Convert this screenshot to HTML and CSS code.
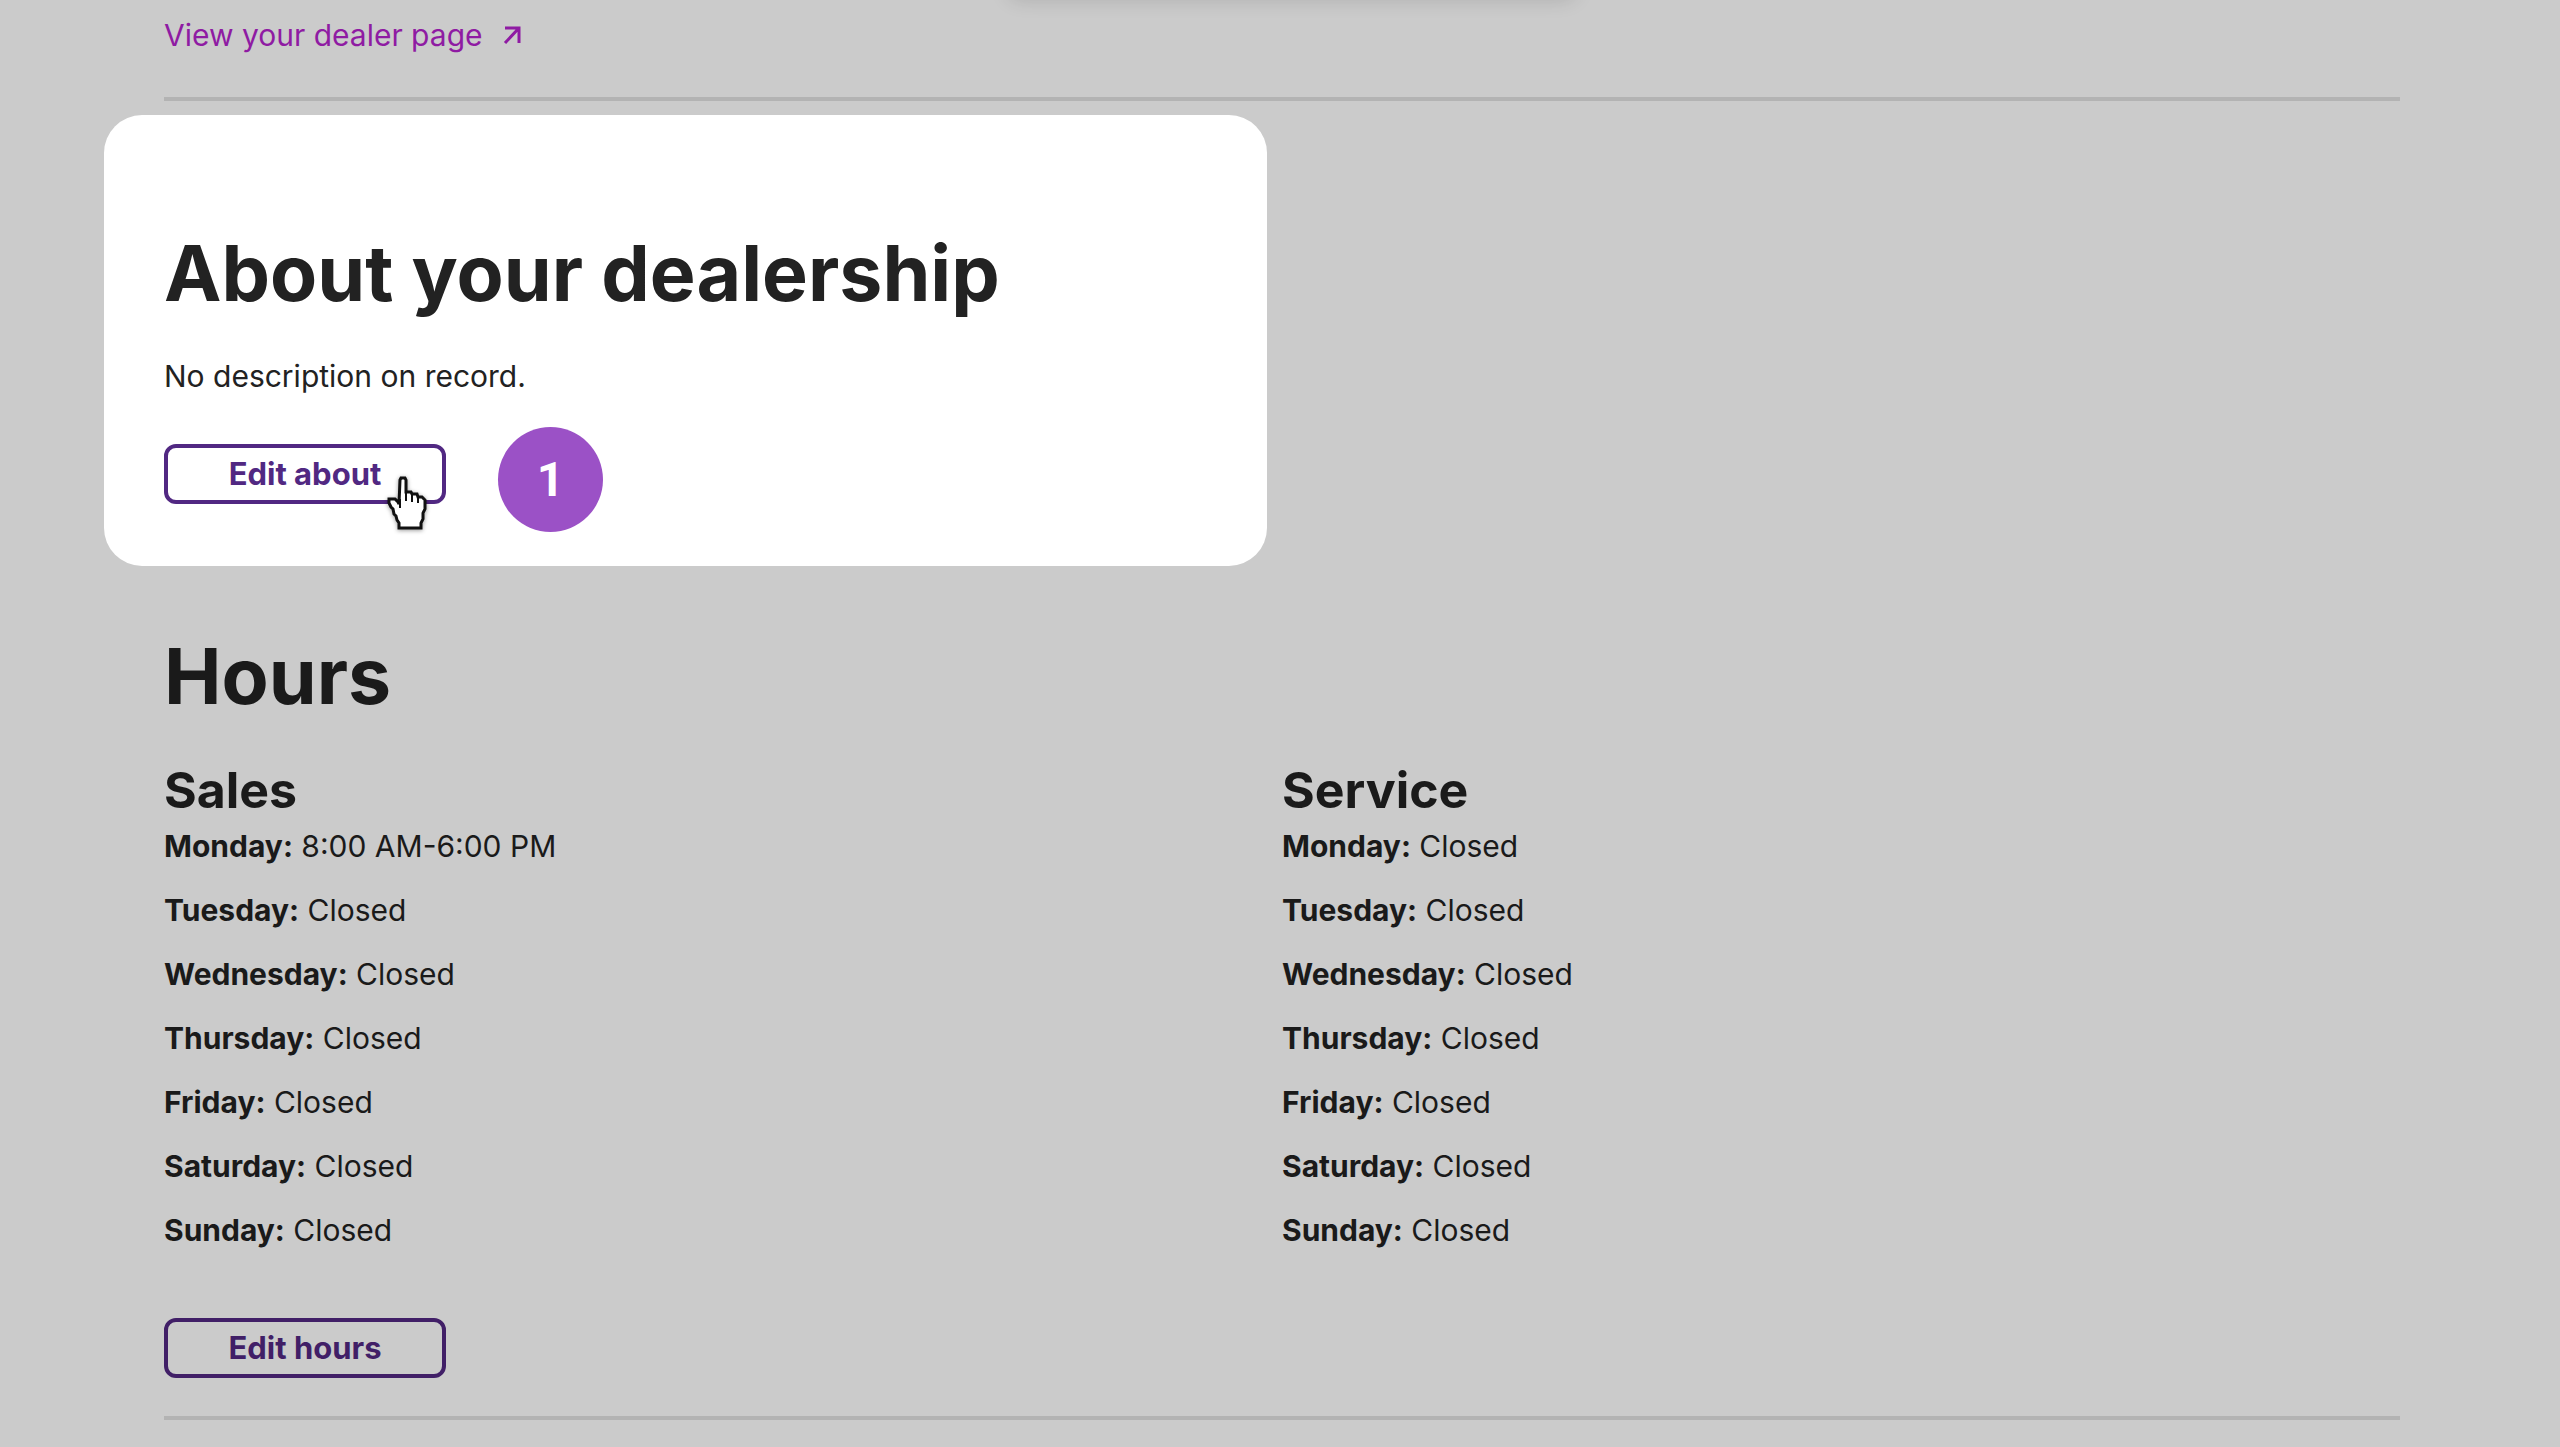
FILE: index.html
```
<!doctype html>
<html lang="en">
  <head>
    <meta charset="utf-8">
    <title>Dealership profile</title>
    <link rel="stylesheet" href="styles.css">
  </head>
  <body>
    <div class="toast"></div>

    <main class="page">
      <a class="dealer-link" href="#">
        View your dealer page
        <svg class="arrow" viewBox="0 0 18 20" aria-hidden="true">
          <path d="M2 3h14v15M16 3L2 18" />
        </svg>
      </a>
      <hr class="divider">

      <section class="about">
        <h1>About your dealership</h1>
        <p>No description on record.</p>
        <div class="actions">
          <button class="btn" type="button">Edit about</button>
          <span class="step">1</span>
          <svg class="cursor" viewBox="0 0 42 54" aria-hidden="true">
            <path d="M13 3l1-2h4l1 2v12h5l1 2h5l1 3h4l3 3v9l-2 4v6l-2 4v5H12v-5l-2-3-1-4-2-2-1-5-2-2-2-4v-4h6l3 3 1 2z" />
            <path class="crease" d="M13 22v9M19 14v10M25 17v8M31 20v6" />
          </svg>
        </div>
      </section>

      <section class="hours">
        <h1>Hours</h1>
        <div class="columns">
          <div>
            <h2>Sales</h2>
            <ul>
              <li><strong>Monday:</strong> 8:00 AM-6:00 PM</li>
              <li><strong>Tuesday:</strong> Closed</li>
              <li><strong>Wednesday:</strong> Closed</li>
              <li><strong>Thursday:</strong> Closed</li>
              <li><strong>Friday:</strong> Closed</li>
              <li><strong>Saturday:</strong> Closed</li>
              <li><strong>Sunday:</strong> Closed</li>
            </ul>
          </div>
          <div>
            <h2>Service</h2>
            <ul>
              <li><strong>Monday:</strong> Closed</li>
              <li><strong>Tuesday:</strong> Closed</li>
              <li><strong>Wednesday:</strong> Closed</li>
              <li><strong>Thursday:</strong> Closed</li>
              <li><strong>Friday:</strong> Closed</li>
              <li><strong>Saturday:</strong> Closed</li>
              <li><strong>Sunday:</strong> Closed</li>
            </ul>
          </div>
        </div>
        <button class="btn" type="button">Edit hours</button>
      </section>
      <hr class="divider">
    </main>
  </body>
</html>
```
FILE: styles.css
```
* {
  box-sizing: border-box;
}
body {
  margin: 0;
  background: #cbcbcb;
  color: #1a1a1a;
  font-family: Inter, "Liberation Sans", sans-serif;
  font-size: 30px;
  line-height: 48px;
}
h1,
h2,
p,
ul {
  margin: 0;
  padding: 0;
}
h1 {
  font-size: 77px;
  line-height: 96px;
  font-weight: 700;
}
h2 {
  font-size: 50px;
  line-height: 64px;
  font-weight: 700;
}
/* only the shadow of the toast reaches into the page */
.toast {
  position: absolute;
  top: -64px;
  left: 50%;
  width: 568px;
  height: 60px;
  margin-left: -272px;
  border-radius: 12px;
  box-shadow: 0 4px 20px rgba(0, 0, 0, 0.14);
}
.page {
  padding: 11px 160px 24px 164px;
}
.dealer-link {
  display: flex;
  align-items: center;
  gap: 20px;
  color: #8f1ba3;
  text-decoration: none;
}
.arrow {
  width: 18px;
  height: 20px;
  fill: none;
  stroke: currentColor;
  stroke-width: 3;
}
.divider {
  height: 4px;
  margin: 38px 0 14px;
  border: 0;
  background: #b3b3b3;
}
.about {
  width: 52%;
  margin-left: -60px;
  padding: 110px 60px 62px;
  border-radius: 38px;
  background: #fff;
  color: #222;
}
.about p {
  margin: 31px 0 44px;
}
.actions {
  position: relative;
}
.btn {
  display: block;
  width: 282px;
  height: 60px;
  border: 4px solid #512882;
  border-radius: 12px;
  background: none;
  color: #512882;
  font: inherit;
  font-size: 31px;
  font-weight: 700;
  line-height: 50px;
}
/* numbered marker beside the button */
.step {
  position: absolute;
  top: -17px;
  left: 334px;
  width: 105px;
  height: 105px;
  border-radius: 50%;
  background: #9b51c6;
  color: #fff;
  font: 700 48px/105px Roboto, sans-serif;
  text-align: center;
}
.cursor {
  position: absolute;
  top: 33px;
  left: 223px;
  width: 42px;
  height: 54px;
  overflow: visible;
  fill: #fff;
  stroke: #111;
  stroke-width: 3;
  filter: drop-shadow(0 1px 2px rgba(0, 0, 0, 0.4));
}
.cursor .crease {
  stroke-width: 2;
}
.hours {
  padding-top: 62px;
}
.columns {
  display: grid;
  grid-template-columns: 1fr 1fr;
  margin: 34px 0 64px;
}
.columns ul {
  display: grid;
  gap: 16px;
  list-style: none;
}
.hours .btn {
  border-color: #411f67;
  color: #411f67;
}
.hours + .divider {
  margin: 38px 0 0;
}
```
